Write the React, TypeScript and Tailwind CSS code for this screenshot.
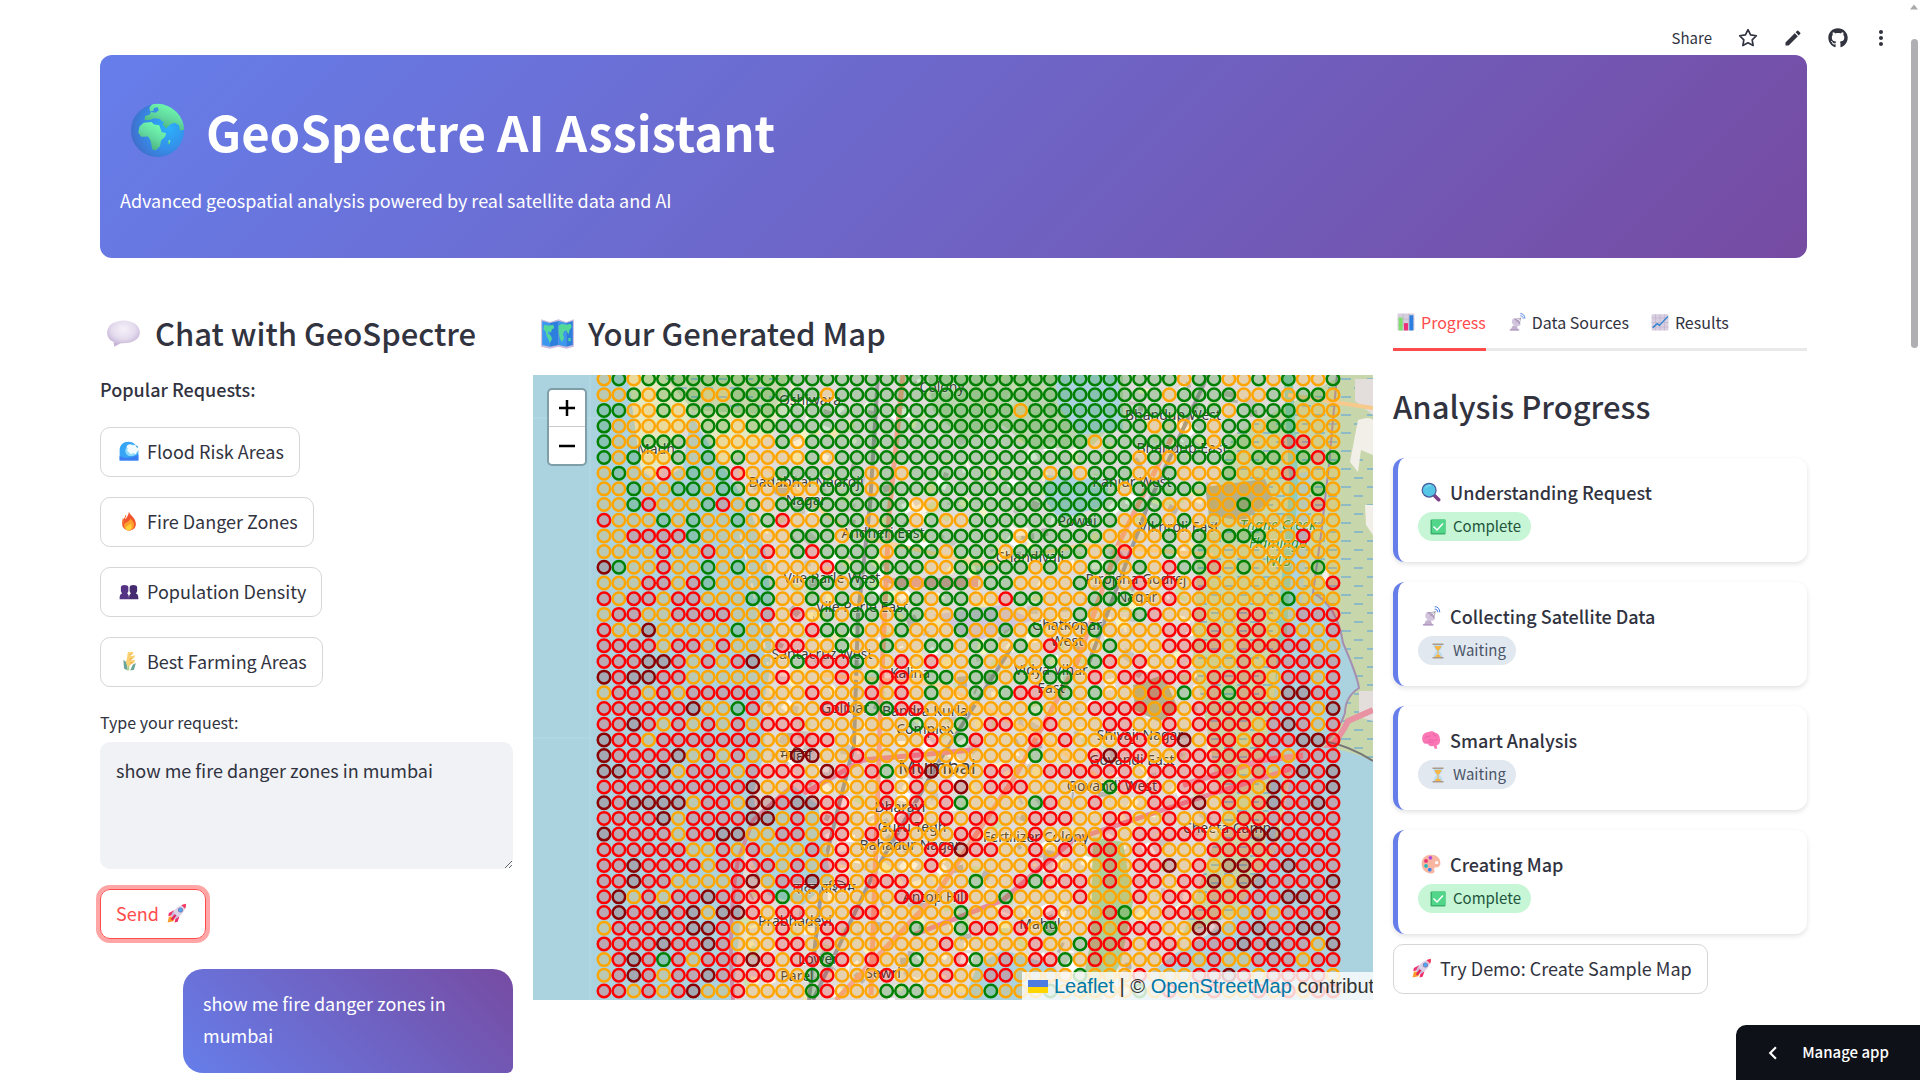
import React, { useState } from 'react';
import { FiStar } from 'react-icons/fi';
import { FaGithub } from 'react-icons/fa';
import { MdEdit, MdMoreVert, MdChevronLeft } from 'react-icons/md';

type IconProps = { className?: string };

const Svg = ({ className = '', children }: IconProps & { children: React.ReactNode }) => (
  <svg viewBox="0 0 32 32" className={`shrink-0 ${className}`} aria-hidden="true">
    {children}
  </svg>
);

const Globe = ({ className }: IconProps) => (
  <Svg className={className}>
    <defs>
      <radialGradient id="sea" cx="0.7" cy="0.45" r="0.75">
        <stop offset="0" stopColor="#2bb0fb" />
        <stop offset="0.5" stopColor="#3491ea" />
        <stop offset="1" stopColor="#4268c8" />
      </radialGradient>
      <linearGradient id="land" x1="0.8" y1="0.1" x2="0.3" y2="1">
        <stop offset="0" stopColor="#74ffb0" />
        <stop offset="0.5" stopColor="#62d9a0" />
        <stop offset="1" stopColor="#45a874" />
      </linearGradient>
      <clipPath id="globeClip"><circle cx="16" cy="16" r="15.5" /></clipPath>
    </defs>
    <circle cx="16" cy="16" r="15.5" fill="url(#sea)" />
    <g fill="url(#land)" clipPath="url(#globeClip)">
      <path d="M19.500 .5 26 2l7 9-1.500 4.500-2.500.5-.5-3-2.500-1.500-2.500.8-2.500 2.500-2-2.500 1-1.500h-1.500l-1-1.500-3.500-.5-2 1-3.500.2.300-2.500 2.500-.7 1-1.600 2.600.4 1.700-1.200-.4-2-2.200.5-.4 1.600-2 .5-.3-2.400 2-2.300 4-.5z" />
      <path d="M8 11.500 12.500 11l1.500 1.500 3 .5 1.500 4 2.500.5-.5 2-2.500 2.500-.5 3-2.500 2.500-2-.5-1-5-1.500-2.500-4 .2-1.700-2.500.7-3.500z" />
      <path d="M22.500 21.500l1 .3-.5 2.400-1-.3z" />
    </g>
  </Svg>
);

const Bubble = ({ className }: IconProps) => (
  <Svg className={className}>
    <defs>
      <radialGradient id="bub" cx="0.5" cy="0.35" r="0.6">
        <stop offset="0" stopColor="#f5f1f9" /><stop offset="0.6" stopColor="#e4dcee" /><stop offset="1" stopColor="#c5b3d6" />
      </radialGradient>
    </defs>
    <path d="M16 4C7.500 4 1 8.500 1 15c0 4.200 2.300 7 6 8.700L7.500 28l6-3.200c10 .8 17.500-3.500 17.500-9.800C31 8.500 24.500 4 16 4z" fill="url(#bub)" />
  </Svg>
);

const WorldMap = ({ className }: IconProps) => (
  <Svg className={className}>
    <path d="M1 3l8 2.500L17 3l7 2.500L31 3v25l-7 2-7-2-8 2-8-2z" fill="#cdbcdc" />
    <path d="M2 4.500l7 2V28l-7-1.500zM17 4.500l7 2V28l-7-1.500z" fill="#3c97ef" />
    <path d="M9 6.500l8-2v22L9 28zM24 6.500l6-2v22L24 28z" fill="#2c7fdc" />
    <path d="M4 8l4 1 4-1 1 3-2 1-1 3-2-1-1 2 3 2 1 3-2 4-1-3-2-4-1-4-2-2zM17 9l3-2 4 1 4-1 1 3-2 3-1 4-2-4-2 1-1 3 1 3-2 4-2-4-1-5zM26 20l2 0v3h-2z" fill="#54d89a" />
  </Svg>
);

const Wave = ({ className }: IconProps) => (
  <Svg className={className}>
    <path d="M1 31V15C1 6 7 1 15 1c5 0 9 2 11 5l5 3-1 3 1 5v14z" fill="#37a5f5" />
    <path d="M1 24c8 4 18 4 30-2v9H1z" fill="#3d7df2" />
    <path d="M24 6c-6-2-13 2-14 9 0 7 6 10 12 9 5-1 8-5 9-9l-2-4z" fill="#8edcfb" />
    <path d="M14 6l4-1 4 2 4-1 2 4 3 1-1 5-2 2-1 3-4-2-4 2-3-3-3-2 1-4-2-3z" fill="#f4fbff" />
  </Svg>
);

const Fire = ({ className }: IconProps) => (
  <Svg className={className}>
    <path d="M16 1c1 5 11 10 11 20 0 6-5 10-11 10S5 27 5 20c0-4 2-8 4-10l1 3c3-3 5-7 6-12z" fill="#f2542d" />
    <path d="M6 11l2 3-1 8-2-3zM10 6l2 2-3 5z" fill="#f8793a" />
    <path d="M19 12c2 4 6 6 5 12-1 4-4 7-8 7s-8-3-8-8c0-5 8-5 11-11z" fill="#ffa02e" />
    <path d="M18 20c2 3 3 5 2 8-1 2-3 3-5 3s-5-2-4-5c1-2 5-2 7-6z" fill="#ffd037" />
  </Svg>
);

const People = ({ className }: IconProps) => (
  <Svg className={className}>
    <path d="M3 10c0-5 12-5 12 0v6c0 2-2 3-2 4 2 1 3 3 3 9H1c0-6 1-8 4-9 0-1-2-2-2-4z" fill="#553384" />
    <path d="M17 10c0-5 12-5 12 0v6c0 2-2 3-2 4 3 1 4 3 4 9H16c0-6 1-8 3-9 0-1-2-2-2-4z" fill="#462a70" />
  </Svg>
);

const Grain = ({ className }: IconProps) => (
  <Svg className={className}>
    <path d="M7 14l5 4 2 13-6-3zM27 19l-5 3-4 9 6-1z" fill="#6aa595" />
    <path d="M15 31V12" stroke="#b9cf8c" strokeWidth="3" />
    <path d="M14 2l9-1-1 4-4 1v2l8-1-2 4-6 2v2l8-1-2 5-5 2-2 3-4-1-2-5 2-8z" fill="#fbd273" />
    <path d="M17 5l5-1-5 4zM17 12l6-1-6 5zM18 18l5-1-5 5z" fill="#f0b04a" />
  </Svg>
);

const Rocket = ({ className }: IconProps) => (
  <Svg className={className}>
    <path d="M3 22l6-1 3 5-2 3-9 2z" fill="#fb9a2d" />
    <path d="M12 11l-9 5-1 5 7-2zM20 21l-3 9-5 1 2-8z" fill="#f0306c" />
    <path d="M7 21C9 12 18 3 30 2c0 11-9 20-18 24z" fill="#ddd3e6" />
    <path d="M7 21c0-3 1-5 3-7l8 8-6 4z" fill="#cbb8d8" />
    <path d="M23 3l7-2c1 3 0 5-1 8z" fill="#f8375f" />
    <path d="M6 26l6-8 3 2-6 8z" fill="#e8235c" />
    <circle cx="21.500" cy="11" r="4" fill="#7a70a5" />
    <circle cx="21.500" cy="11" r="3" fill="#50a8f5" />
  </Svg>
);

const BarChart = ({ className }: IconProps) => (
  <Svg className={className}>
    <rect x="1" y="1" width="30" height="30" rx="1.500" fill="#d6cedd" />
    <path d="M11 1v30M21 1v30M1 11h30M1 21h30" stroke="#b9adc4" />
    <rect x="3" y="8" width="7" height="23" fill="#7fe06c" />
    <rect x="12.500" y="18" width="7" height="13" fill="#ec2f77" />
    <rect x="22" y="4" width="7" height="27" fill="#2c7fe0" />
  </Svg>
);

const Dish = ({ className }: IconProps) => (
  <Svg className={className}>
    <path d="M4 31l4-8 7-1 4 9z" fill="#c3b1d0" />
    <path d="M3 29h17v2H3z" fill="#ad97bf" />
    <path d="M9 10c-4 5-2 10 3 13 4 1 8 1 10-2z" fill="#d2c4dc" />
    <path d="M9 10l13 11c1-5-6-13-13-11z" fill="#b7a3c6" />
    <path d="M15 16l8-7M20 19l3-10M12 11l11-2" stroke="#8d7c9b" fill="none" />
    <path d="M22 5c3 0 5 2 5 5M22 1c5 0 8 4 8 9" stroke="#3f79e8" strokeWidth="1.600" fill="none" />
  </Svg>
);

const LineChart = ({ className }: IconProps) => (
  <Svg className={className}>
    <rect x="1" y="2" width="30" height="29" rx="1.500" fill="#d9cfe0" />
    <path d="M8 2v29M16 2v29M24 2v29M1 9h30M1 17h30M1 25h30" stroke="#bbaec7" />
    <path d="M3 26l8-7 4 3 15-16" stroke="#2c83d2" strokeWidth="2.500" fill="none" />
  </Svg>
);

const Lens = ({ className }: IconProps) => (
  <Svg className={className}>
    <path d="M20 21l3-2 8 8c1 3-2 5-4 4l-8-8z" fill="#7d3f86" />
    <circle cx="13" cy="13" r="12" fill="#4c5b9c" />
    <circle cx="13" cy="13" r="10" fill="#56c6e6" />
    <path d="M6 11c2-5 7-7 11-5-5 0-8 2-11 5z" fill="#9be6f5" />
  </Svg>
);

const Brain = ({ className }: IconProps) => (
  <Svg className={className}>
    <path d="M2 15C1 8 6 3 12 3c3-2 8-1 10 1 5 1 8 5 8 9 2 6-1 11-5 11l1 6h-4l-2-5c-4 2-8 0-9-3-5 1-9-2-9-7z" fill="#fb76b4" />
    <path d="M6 13c3-4 6-1 9-4M12 16c5-1 8 3 14-1M9 20c3-3 7 1 11 0M20 5c-1 3 2 4 5 5" stroke="#e860a6" strokeWidth="1.500" fill="none" />
  </Svg>
);

const Palette = ({ className }: IconProps) => (
  <Svg className={className}>
    <path d="M16 1C6 1 1 8 1 16s6 15 15 15c5 0 7-3 5-6-1-3 1-4 4-4 4 0 6-3 6-6C31 6 25 1 16 1zm9 10c3 0 4 4 1 5-4 1-5-4-1-5z" fill="#f8b5a0" fillRule="evenodd" />
    <circle cx="15" cy="6" r="3" fill="#b04be0" />
    <circle cx="8" cy="11" r="3" fill="#e8326f" />
    <circle cx="8" cy="19" r="3" fill="#27b8c0" />
    <circle cx="14" cy="25" r="3" fill="#3f86ec" />
  </Svg>
);

const CheckBox = ({ className }: IconProps) => (
  <Svg className={className}>
    <rect x="1" y="1" width="30" height="30" rx="2" fill="#3ab06d" />
    <rect x="4" y="1" width="27" height="27" rx="1.500" fill="#52d68a" />
    <path d="M7 15l7 7L26 9" stroke="#fff" strokeWidth="3" fill="none" />
  </Svg>
);

const Hourglass = ({ className }: IconProps) => (
  <Svg className={className}>
    <path d="M7 3h18c0 7-3 9-6 13 3 4 6 6 6 13H7c0-7 3-9 6-13-3-4-6-6-6-13z" fill="#b9dcf2" />
    <path d="M9 6h14c-1 4-4 7-6 9v8c3 1 5 3 6 6H9c1-3 3-5 6-6v-8c-2-2-5-5-6-9z" fill="#f6b545" />
    <path d="M5 1h22v3H5zM5 28h22v3H5z" fill="#a99a8c" />
  </Svg>
);

/* One letter per marker, west half then east half: G low, O moderate, R high, D extreme. */
const ROWS = [
  'OGOGGGGGGGGGGGGGGGGGGGGG GGGGGGGGGGGGGGGOGGOOGOGOOG',
  'OOGOGGGOOGGGGGGOGGGGGGGG GGGGGGGGGGGGGGOGGGGOOGOGGO',
  'GGOOGOGGGGGGGGGGGGGGGGGG GGGGOGGGGGGGGGGGGGOGGGGOOO',
  'GOOOOOOGGOGGGGGGGGGGGGGG GGGGGGGGGGGGGOGOGOGGOGGOOO',
  'GOOGGGOGOOOOGOGGGGGGGGGG GGGGGGGGGOGGGGGGGOGGOORROO',
  'GOGOOGOGOGOOOOGOGGGGGGGG GGGGGGGGGGGGOGOGGGGOGGOGRG',
  'OGOOROGOGROOGGGGGGOGOGGG GGGGGGOGOGGGOOGOOOGOOOROOO',
  'OOGOOGGOGGOOOOOGGGOGGGGG GGGGGGGGGGGOGGGGGOOOOOOOGO',
  'OOGROOOGROGOGGGGGGGGGOOG GGGGGGGGGGGGGGOOOOOGOOOORO',
  'ROOOGOGOOGOGROOGGGOGGOGO OGGGGGGGGGGOOGOGOOOOOOOOOO',
  'OORRRRGOOOOOOGGGOGGGGGGG GGGGOGGGGGOOOOGOGOGGGOOROO',
  'OOOOROOROOOROGRGGGGOGGGO GGGOGGGGGOGROOGOGOOOOOOOOO',
  'DGOOROOGOGOOOOORGGGGGGOO GGGGGOGOOGGOGORGGROGOOOOGO',
  'OOORRORGOOOGOOGGOGGOGOGG GOGGOOOOGOGOROROROOOOOOOOR',
  'RORRORROOOGGOOGOGOGGOGOG GOORGGOOOGGGOOROOOOOOOGOOO',
  'ORROORRRROOROROGOGGOGGOO GGGOOOOOGOOOGROOROORROORRR',
  'ROODOOOOOGOOOORGGGOOGOOO GOOGOGOOOGOOOORRORORROROOR',
  'RRRRORROROOORROOGOOGOOGG OGGOGOROOOGOOORRRRORRRRROO',
  'RRRDDRORORDOOGRRRGOOROROO'.slice(0, 24) + ' OGOOOOGOOGROROOROOORORRRRR',
  'DRDDRROOOOOOROOOROGRROGG OGGOGOGGORORRRRRORRRRORROR',
  'ORRORORRRRROOOROOOROROGO OGOGRROGOGOOOROGORGRRODDRR',
  'RRRRRRDOOGROOOORROGGRROO OOOOOGOOORRRRORORRRRRRRROD',
  'RRDRORORORORRROOOOOOOGOO GORROOROOORROORORRRRORDROR',
  'DRRORRRRRRROORRROOOOOORO GROOOROROOORRORDORRORRRDDR',
  'DRRRRDOROROOODDOOROOOROO OOOOOGOOORDRROORRRRRRRORRR',
  'DDRRDORRRORRRRODRORGORDO OORROORRRRRRORRRRRRORORDRD',
  'RRRRRRRRRRDOORROOOOROROR DORRROOOOOGRRRORRRRRODRRRD',
  'DRDDDDORRODDRDDRROOROROR GOOOOGROOROOORRRDORORDRRDR',
  'RRRRDORRRRDDORORROOORROR ORROORRROORROOROORORRRRRRR',
  'DRRRRORRDDOORRORROROROOO RROOOROOOORORRRRRORRDDRRRR',
  'RRRRRROOROROOOROROOOOORR DRROORORORRORROOORRRRRRRRR',
  'RRDRRRRORRRRORORROOOOORO OOOOORROOORORRDORODDRRDRRR',
  'RRDRROOOORDORRDORORRROOO OGOORGRRRORORRORRDODDRRRRD',
  'RDORORRDRRRRGOOOOOOORROO ROOGOOOOROOORORRORRRRRDDRR',
  'RDRRDRDODDRORROOORROOOOO GOOROOROOORGOORRRROORORRRD',
  'ORRRRRDDROOOROORROOOOGOO GRROROGOORORRROODDORDRRDDR',
  'RRRRDRRDROOORROROOOOOOOR OOOOOROOGRRRORRORRRDRDRROD',
  'ORDRGRORRRDRORRGROROOGOO RGORORRGOROOOORROROORRRORR',
  'ORDRORRDRRRROOGROOOROOOR OORROOOOGOOOROOORRDRORRRRO',
  'RRORORDOOROOOOGROOOGGGOO OOGOOOGOOOOOGOROOROORORORR',
].map((row) => row.replace(' ', ''));

const STROKE: Record<string, string> = { G: '#008000', O: '#ffa500', R: '#ff0000', D: '#8b0000' };

const LABELS: [number, number, string][] = [
  [277, 30, 'Oshiwara'], [409, 17, 'Colony'], [123, 79, 'Madh'],
  [273, 112, 'Dadabhai Naoroji'], [273, 130, 'Nagar'], [350, 163, 'Andheri East'],
  [299, 208, 'Vile Parle West'], [329, 237, 'Vile Parle East'], [289, 284, 'Santacruz West'],
  [377, 303, 'Kalina'], [312, 338, 'Golibar'], [392, 341, 'Bandra Kurla'], [392, 359, 'Complex'],
  [367, 437, 'Dharavi'], [379, 457, 'Guru Tegh'], [377, 475, 'Bahadur Nagar'],
  [402, 527, 'Antop Hill'], [262, 551, 'Prabhadevi'], [285, 589, 'Lower'], [264, 606, 'Parel'],
  [350, 603, 'Sewri'], [544, 151, 'Powai'], [497, 187, 'Chandivali'],
  [640, 45, 'Bhandup West'], [649, 78, 'Bhandup East'], [599, 112, 'Kanjur West'],
  [646, 157, 'Vikhroli East'], [603, 209, 'Pirojsha Godrej'], [604, 227, 'Nagar'],
  [534, 255, 'Ghatkopar'], [534, 271, 'West'], [518, 300, 'Vidya Vihar'], [518, 318, 'East'],
  [607, 365, 'Shivaji Nagar'], [599, 390, 'Govandi East'], [579, 416, 'Govandi West'],
  [503, 467, 'Fertilizer Colony'], [694, 458, 'Cheeta Camp'], [507, 554, 'Mahul'],
  [263, 385, 'माहिम'], [291, 518, 'दादर पश्चिम'],
];

const blocks = (() => {
  let seed = 11;
  const rnd = () => (seed = (seed * 16807) % 2147483647) / 2147483647;
  const fills = ['#f6f3c4', '#ffffff', '#c9c6c2', '#f2e5b0', '#cde0b4', '#fbf6e8', '#b9b4b0'];
  return Array.from({ length: 900 }, () => ({
    x: Math.round(200 + rnd() * 520),
    y: Math.round(rnd() * 625),
    w: Math.round(2 + rnd() * 11),
    h: Math.round(2 + rnd() * 9),
    a: Math.round(rnd() * 90 - 45),
    f: fills[Math.floor(rnd() * fills.length)],
  }));
})();

const LAND =
  'M95 0L108 95 125 108 150 92 158 40 190 92 215 130 232 175 240 240 236 300 230 330 232 375 220 420 224 440 240 425 262 412 285 430 292 470 298 505 270 530 235 520 212 470 206 560 200 625H430L445 590 470 575 520 590 545 625H585L640 580 700 545 725 500 745 470 760 385 775 300 790 200 800 100 810 0z';

const MapCanvas = () => (
  <svg viewBox="0 0 840 625" preserveAspectRatio="xMinYMid slice" className="block h-full w-full bg-[#aad3df]" role="img" aria-label="Fire danger map of Mumbai">
    <defs>
      <clipPath id="landClip"><path d={LAND} /></clipPath>
      <pattern id="marsh" width="26" height="18" patternUnits="userSpaceOnUse">
        <path d="M2 4h10M15 13h9" stroke="#4f9de0" strokeWidth="1.200" />
      </pattern>
    </defs>
    <path d={LAND} fill="#dfdcda" />
    <g clipPath="url(#landClip)">
      {blocks.map((b, i) => (
        <rect key={i} x={b.x} y={b.y} width={b.w} height={b.h} fill={b.f} transform={`rotate(${b.a} ${b.x} ${b.y})`} />
      ))}
      <path d="M95 0H255L240 60 190 90 160 35 125 105 105 90z" fill="#e6e8c0" />
      <path d="M130 0H255L240 40 160 35z" fill="#c8d7ab" />
      <path d="M130 0H255L240 40 160 35z" fill="url(#marsh)" />
      <path d="M395 0H590V40L560 70 500 75 470 50 430 65 400 35z" fill="#add19e" opacity="0.700" />
      <path d="M522 0L585 0 590 55 545 60 525 30zM512 100l65 5-5 25-45 15-15-20z" fill="#aad3df" />
      <path d="M700 60L810 0V280L760 380 742 480 700 540 650 560 690 440 660 280 665 170z" fill="#c8d7ab" />
      <path d="M700 60L810 0V280L760 380 742 480 700 540 650 560 690 440 660 280 665 170z" fill="url(#marsh)" />
      <path d="M672 112l60-8 8 20-30 22-34-6zM600 310l30-10 16 35-20 12-24-12z" fill="#b5b08a" />
      <path d="M560 462l30 5 10 60-12 60-20 38h-22l12-60z" fill="#aed09a" />
      <path d="M758 100l20-4-8 120-10 120-20 140-8-8 18-180z" fill="#aad3df" />
      <path d="M755 0l6 110-10 120-8 150" stroke="#8fcdb8" strokeWidth="9" fill="none" />
      <path d="M345 0l-8 130-12 110-4 130-30 120-15 135M480 270l-70 110-70 120-60 125M555 290l60-160 60-130" stroke="#9c9a9c" strokeWidth="4" fill="none" />
      <path d="M370 0l-14 140-8 180-10 300M640 60l-55 110-42 120-60 110-80 120-100 105" stroke="#f3a58c" strokeWidth="5" fill="none" />
      <path d="M230 90l90 70 130 30 100-20 130 10M290 300l120 10 110 60 70 50" stroke="#fbd39c" strokeWidth="4" fill="none" />
      <path d="M200 470l50-40 80-45 110-10M380 560l90-35 70-60 120-40 110-35" stroke="#e68ba0" strokeWidth="5" fill="none" />
      <path d="M345 203h100v9h-80z" fill="#dfa0a5" />
      <path d="M400 240l70-10 30 15-60 22z" fill="#cfc6de" />
    </g>
    <path d="M804 0H840V395Q815 390 798 392L770 385Q808 360 812 320 800 240 780 222L790 120z" fill="#c8d7ab" />
    <path d="M804 0H840V395Q815 390 798 392L770 385Q808 360 812 320 800 240 780 222L790 120z" fill="url(#marsh)" />
    <path d="M778 218q24 6 32 50 14 30 16 45-16 10-14 25-8 22-38 40l-45 20 20-130z" fill="#aad3df" />
    <path d="M804 0L796 90 788 160 780 218Q804 230 810 268 824 300 826 313 812 322 812 338 804 362 776 380" stroke="#a58fb0" strokeWidth="2" fill="none" />
    <path d="M825 45q12-4 15 0v35l-12-5-3 22-8-10z M832 130l8 0v30l-7-10zM790 193l6 3-1 12-6-4z" fill="#f2efe9" />
    <path d="M822 4h18v36l-18-14zM826 316h14v30l-14-4z" fill="#e3dedb" />
    <path d="M755 20l85 13" stroke="#f8c98c" strokeWidth="4" fill="none" />
    <path d="M650 410l80-25 45-5Q800 378 815 346L840 335" stroke="#e892a2" strokeWidth="6" fill="none" />
    <path d="M770 374q30-6 70 12V400H770z" fill="#aad3df" />
    <path d="M790 366q25 4 50 20" stroke="#777" strokeWidth="2" fill="none" />
    <path d="M57 0v625M0 43h70M0 363h70" stroke="#b4dae4" />
    <path d="M205 150q15 60 30 140" stroke="#eee5d8" strokeWidth="2" strokeDasharray="6 4" fill="none" />
    <path d="M200 625q-6-80 5-140l15-40 40-35" stroke="#d8718f" strokeWidth="4" fill="none" opacity=".7" />
    <g textAnchor="middle" fill="#3a3a3a" stroke="#fff" strokeOpacity=".5" strokeWidth="2" paintOrder="stroke" className="font-['Noto_Sans','Noto_Sans_CJK_SC',sans-serif] text-[14px]">
      {LABELS.map(([x, y, t]) => (
        <text key={`${x}-${y}`} x={x} y={y}>{t}</text>
      ))}
      <text x="404" y="399" className="text-[20px]">Mumbai</text>
      <g fill="#2f8f2a" fontStyle="italic">
        <text x="745" y="155">Thane Creek</text>
        <text x="745" y="173">Flamingo</text>
        <text x="745" y="191">WLS</text>
      </g>
    </g>
    {ROWS.map((row, r) =>
      row.split('').map((k, c) => (
        <circle key={`${r}-${c}`} cx={71 + (c * 729) / 49} cy={4 + (r * 612) / 39} r="6.250" fill={STROKE[k]} fillOpacity="0.200" stroke={STROKE[k]} strokeWidth="2.500" />
      )),
    )}
  </svg>
);

const MapPanel = () => (
  <div className="relative mt-[19px] h-[625px] overflow-hidden">
    <MapCanvas />
    <div className="absolute left-3.5 top-[13px] flex w-10 flex-col overflow-hidden rounded-[5px] border-2 border-black/25 bg-white bg-clip-padding text-black">
      {['Zoom in', 'Zoom out'].map((label, i) => (
        <button key={label} aria-label={label} className="flex h-[37px] items-center justify-center border-b border-[#ccc] last:border-b-0">
          <svg viewBox="0 0 16 16" className="size-4" aria-hidden="true">
            <path d={i === 0 ? 'M0 8h16M8 0v16' : 'M0 8h16'} stroke="#000" strokeWidth="2.500" />
          </svg>
        </button>
      ))}
    </div>
    <div className="absolute bottom-0 right-0 flex h-7 w-[351px] items-center overflow-hidden whitespace-nowrap bg-white/80 pl-1.5 font-['Liberation_Sans',Arial,sans-serif] text-[20px] text-[#333]">
      <svg viewBox="0 0 20 13" className="mr-1.5 h-[13px] w-5 shrink-0" aria-hidden="true">
        <path fill="#4c7be1" d="M0 0h20v7H0z" />
        <path fill="#ffd500" d="M0 7h20v6H0z" />
      </svg>
      <a href="#leaflet" className="text-[#0078a8]">Leaflet</a>
      <span className="whitespace-pre"> | © </span>
      <a href="#osm" className="text-[#0078a8]">OpenStreetMap</a>
      <span className="whitespace-pre"> contributors</span>
    </div>
  </div>
);

const REQUESTS = [
  { label: 'Flood Risk Areas', Icon: Wave },
  { label: 'Fire Danger Zones', Icon: Fire },
  { label: 'Population Density', Icon: People },
  { label: 'Best Farming Areas', Icon: Grain },
];

const STEPS = [
  { label: 'Understanding Request', Icon: Lens, done: true },
  { label: 'Collecting Satellite Data', Icon: Dish, done: false },
  { label: 'Smart Analysis', Icon: Brain, done: false },
  { label: 'Creating Map', Icon: Palette, done: true },
];

const TABS = [
  { label: 'Progress', Icon: BarChart },
  { label: 'Data Sources', Icon: Dish },
  { label: 'Results', Icon: LineChart },
];

const StepCard = ({ label, Icon, done }: (typeof STEPS)[number]) => (
  <li className="rounded-xl border-l-[5px] border-[#667eea] bg-white px-5 pb-[21px] pt-5 shadow-[0_2px_5px_rgba(0,0,0,0.12)]">
    <h3 className="flex items-center pl-[3px] text-[18px] font-medium leading-[28px]">
      <Icon className="mr-[9px] size-5" />
      {label}
    </h3>
    <div className="mt-1.5 flex">
      <span className={done
        ? 'flex h-[29px] items-center rounded-full bg-[#c6f6d5] pl-3 pr-2.5 text-[15px] text-[#22543d]'
        : 'flex h-[29px] items-center rounded-full bg-[#e2e8f0] pl-3 pr-2.5 text-[15px] text-[#4a5568]'}>
        {done ? <CheckBox className="mr-[7px] size-4" /> : <Hourglass className="mr-[7px] size-4" />}
        {done ? 'Complete' : 'Waiting'}
      </span>
    </div>
  </li>
);

export default function App() {
  const [text, setText] = useState('show me fire danger zones in mumbai');
  const [tab, setTab] = useState('Progress');
  return (
    <div className="relative min-h-screen bg-white font-['Noto_Sans_CJK_SC',sans-serif] text-[18px] text-[#31333f]">
      <header className="flex h-[55px] items-center justify-end pr-[27px] pt-5">
        <button className="mr-[26px] text-[15px] leading-6">Share</button>
        <button aria-label="Star" className="mr-[25px]"><FiStar className="size-5" /></button>
        <button aria-label="Edit" className="mr-[25px]"><MdEdit className="size-5" /></button>
        <button aria-label="View on GitHub" className="mr-[21px]"><FaGithub className="size-5" /></button>
        <button aria-label="More options"><MdMoreVert className="size-6" /></button>
      </header>

      <main className="pl-[100px] pr-[113px]">
        <section className="rounded-xl bg-[linear-gradient(135deg,#667eea_0%,#764ba2_100%)] px-5 pb-[42px] pt-12 text-white">
          <h1 className="flex items-center pl-2.5 text-[49px] font-bold leading-[53px]">
            <Globe className="mr-[21px] size-[55px]" />
            GeoSpectre AI Assistant
          </h1>
          <p className="mt-[26px] leading-[32px]">Advanced geospatial analysis powered by real satellite data and AI</p>
        </section>

        <div className="mt-[52px] grid grid-cols-[413fr_840fr_414fr] gap-5">
          <section className="min-w-0">
            <h2 className="flex items-center pl-1.5 text-[31px] font-medium leading-[46px]">
              <Bubble className="mr-3.5 size-[35px]" />
              Chat with GeoSpectre
            </h2>
            <p className="mt-[18px] font-medium leading-[30px]">Popular Requests:</p>
            <div className="mt-[23px] flex flex-col items-start gap-5">
              {REQUESTS.map(({ label, Icon }) => (
                <button key={label} className="flex h-[50px] items-center rounded-[10px] border border-[#31333f]/20 pb-0.5 pl-[18px] pr-[15px]">
                  <Icon className="mr-2 size-5" />
                  {label}
                </button>
              ))}
            </div>
            <label htmlFor="request" className="mt-[23px] block text-[16px] leading-6">Type your request:</label>
            <textarea
              id="request"
              value={text}
              onChange={(e) => setText(e.target.value)}
              className="mt-2 block h-[127px] w-full resize-y rounded-[10px] bg-[#f0f2f6] px-4 py-[13px] leading-[30px] outline-none"
            />
            <button className="mt-5 flex h-[50px] items-center rounded-[10px] border border-[#ff4b4b] pb-0.5 pl-[15px] pr-[18px] text-[#ff4b4b] ring-4 ring-[#ff4b4b]/50">
              Send
              <Rocket className="ml-2 size-5" />
            </button>
            <p className="ml-[83px] mt-[30px] rounded-[20px] rounded-br-[6px] bg-[linear-gradient(45deg,#667eea,#764ba2)] px-5 pb-[22px] pt-[18px] leading-[32px] text-white">
              show me fire danger zones in mumbai
            </p>
          </section>

          <section className="min-w-0">
            <h2 className="flex items-center pl-[7px] text-[31px] font-medium leading-[46px]">
              <WorldMap className="mr-[13px] size-[35px]" />
              Your Generated Map
            </h2>
            <MapPanel />
          </section>

          <section className="min-w-0">
            <div role="tablist" className="flex h-[41px] gap-[18px] shadow-[inset_0_-3px_0_#e9e9ea]">
              {TABS.map(({ label, Icon }) => (
                <button
                  key={label}
                  role="tab"
                  aria-selected={tab === label}
                  onClick={() => setTab(label)}
                  className={tab === label
                    ? 'flex items-center border-b-[3px] border-[#ff4b4b] pb-3.5 pl-1 text-[16px] leading-6 text-[#ff4b4b]'
                    : 'flex items-center border-b-[3px] border-transparent pb-3.5 pl-1 text-[16px] leading-6'}
                >
                  <Icon className="mr-1.5 size-[18px]" />
                  {label}
                </button>
              ))}
            </div>
            <h2 className="mt-8 text-[31px] font-medium leading-[46px]">Analysis Progress</h2>
            <ul className="mt-[29px] flex flex-col gap-5">
              {STEPS.map((s) => <StepCard key={s.label} {...s} />)}
            </ul>
            <button className="mt-2.5 flex h-[50px] items-center rounded-[10px] border border-[#31333f]/20 pb-0.5 pl-[18px] pr-[15px]">
              <Rocket className="mr-2 size-5" />
              Try Demo: Create Sample Map
            </button>
          </section>
        </div>
      </main>

      <div className="fixed right-0 top-0 flex h-[348px] w-3 flex-col items-center" aria-hidden="true">
        <svg viewBox="0 0 10 6" className="mt-1 h-1.5 w-2"><path d="M5 0l5 6H0z" fill="#a9a9ae" /></svg>
        <div className="mt-[29px] w-[7px] grow rounded-full bg-[#b0b0b4]" />
      </div>
      <button className="fixed bottom-0 right-0 flex h-[55px] items-center rounded-tl-[10px] bg-[#0e1117] pl-6 pr-[31px] text-[15px] font-medium text-white">
        <MdChevronLeft className="mr-4 size-[26px]" />
        Manage app
      </button>
    </div>
  );
}
